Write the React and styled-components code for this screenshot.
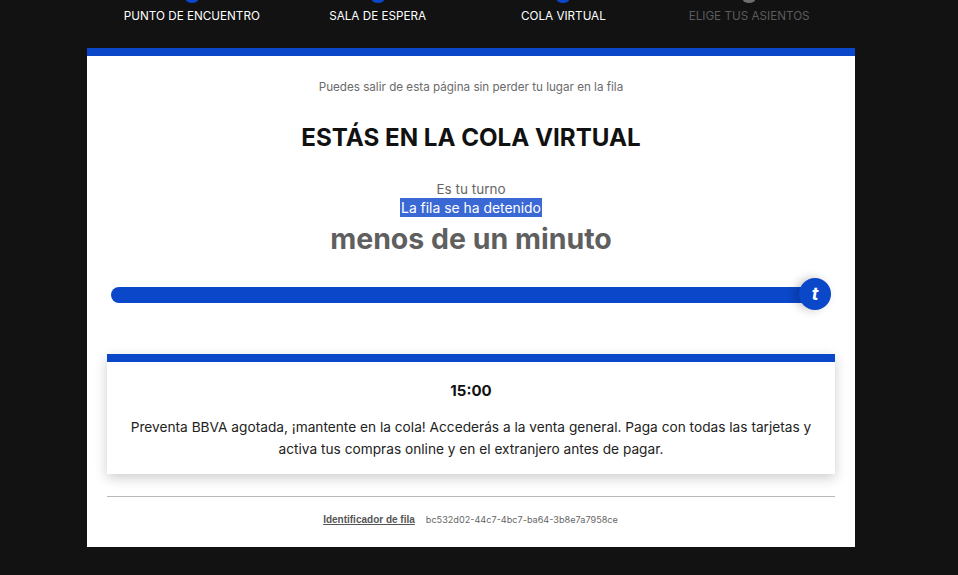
import React from "react";
import styled, { createGlobalStyle } from "styled-components";

const Global = createGlobalStyle`
  html, body { margin: 0; padding: 0; background: #121212; }
  body { font-family: "Inter", "Lato", sans-serif; height: 575px; overflow: hidden; }
`;
const Page = styled.div`
  width: 768px;
  margin-left: 87px;
`;
const Steps = styled.ol`
  list-style: none;
  margin: 0;
  padding: 0 13px 0 12px;
  height: 48px;
  display: grid;
  grid-template-columns: repeat(4, 1fr);
  box-sizing: border-box;
`;
const Step = styled.li`
  display: flex;
  flex-direction: column;
  align-items: center;
  font-size: 11.7px;
  line-height: 14px;
  color: ${(p) => (p.$off ? "#5b5b5b" : "#fff")};
  text-transform: uppercase;
`;
const Dot = styled.span`
  width: 12px;
  height: 3px;
  border-radius: 0 0 6px 6px / 0 0 3px 3px;
  background: ${(p) => (p.$off ? "#6e6e6e" : "#0a47c9")};
  margin-bottom: 6px;
`;
const Card = styled.main`
  height: 499px;
  box-sizing: border-box;
  background: #fff;
  border-top: 8px solid #0a47c9;
  padding: 23px 20px 0;
  display: flex;
  flex-direction: column;
  align-items: center;
`;
const Hint = styled.p`
  margin: 0;
  font-size: 11.65px;
  line-height: 16px;
  color: #6b6b6b;
`;
const Title = styled.h1`
  margin: 28px 0 0;
  font-size: 24.15px;
  line-height: 30px;
  font-weight: 700;
  color: #111;
`;
const Turn = styled.p`
  margin: 28px 0 0;
  font-size: 13.5px;
  line-height: 17px;
  color: #666;
`;
const Stopped = styled.p`
  margin: 0;
  padding: 1px 1px 0;
  font-size: 13.9px;
  line-height: 18px;
  background: #3a68d4;
  color: #fff;
`;
const Wait = styled.h2`
  margin: 2px 0 0;
  font-size: 28.5px;
  line-height: 40px;
  font-weight: 700;
  color: #5f5f5f;
`;
const Track = styled.div`
  margin-top: 19px;
  align-self: stretch;
  margin-left: 4px;
  margin-right: 4px;
  height: 32px;
  display: flex;
  align-items: center;
`;
const Fill = styled.div`
  flex: 1;
  height: 16px;
  margin-top: 2px;
  margin-right: -16px;
  background: #0a47c9;
  border-radius: 8px 0 0 8px;
`;
const Knob = styled.div`
  position: relative;
  width: 32px;
  height: 32px;
  border-radius: 50%;
  background: #0a47c9;
  color: #fff;
  display: flex;
  align-items: center;
  justify-content: center;
  font: italic 700 18px/1 "Inter", sans-serif;
  box-shadow: -4px 0 10px rgba(0, 0, 0, 0.22);
`;
const Notice = styled.section`
  margin-top: 44px;
  align-self: stretch;
  height: 120px;
  box-sizing: border-box;
  border-top: 8px solid #0a47c9;
  background: #fff;
  padding: 19px 20px 0;
  text-align: center;
  box-shadow: 0 4px 12px rgba(0, 0, 0, 0.2);
`;
const Time = styled.h3`
  margin: 0;
  font-size: 15px;
  line-height: 20px;
  font-weight: 700;
  color: #111;
`;
const Body = styled.p`
  margin: 15px -4px 0;
  font-size: 13.7px;
  line-height: 22px;
  color: #222;
`;
const Rule = styled.hr`
  margin: 22px 0 0;
  align-self: stretch;
  border: 0;
  border-top: 1px solid #b8b8b8;
`;
const Foot = styled.div`
  margin-top: 17px;
  padding-right: 1px;
  display: flex;
  align-items: center;
  gap: 11px;
`;
const FootLabel = styled.span`
  font: 700 10px/12px "Liberation Sans", Arial, sans-serif;
  color: #555;
  text-decoration: underline;
`;
const FootId = styled.span`
  font-size: 9.15px;
  line-height: 12px;
  color: #666;
`;

const steps = [
  ["Punto de encuentro"],
  ["Sala de espera"],
  ["Cola virtual"],
  ["Elige tus asientos", true],
];

export default function App() {
  return (
    <Page>
      <Global />
      <Steps>
        {steps.map(([label, off]) => (
          <Step key={label} $off={off}>
            <Dot $off={off} />
            {label}
          </Step>
        ))}
      </Steps>
      <Card>
        <Hint>Puedes salir de esta página sin perder tu lugar en la fila</Hint>
        <Title>ESTÁS EN LA COLA VIRTUAL</Title>
        <Turn>Es tu turno</Turn>
        <Stopped>La fila se ha detenido</Stopped>
        <Wait>menos de un minuto</Wait>
        <Track>
          <Fill />
          <Knob>t</Knob>
        </Track>
        <Notice>
          <Time>15:00</Time>
          <Body>
            Preventa BBVA agotada, ¡mantente en la cola! Accederás a la venta general. Paga con todas las tarjetas y activa tus compras online y en el extranjero antes de pagar.
          </Body>
        </Notice>
        <Rule />
        <Foot>
          <FootLabel>Identificador de fila</FootLabel>
          <FootId>bc532d02-44c7-4bc7-ba64-3b8e7a7958ce</FootId>
        </Foot>
      </Card>
    </Page>
  );
}
